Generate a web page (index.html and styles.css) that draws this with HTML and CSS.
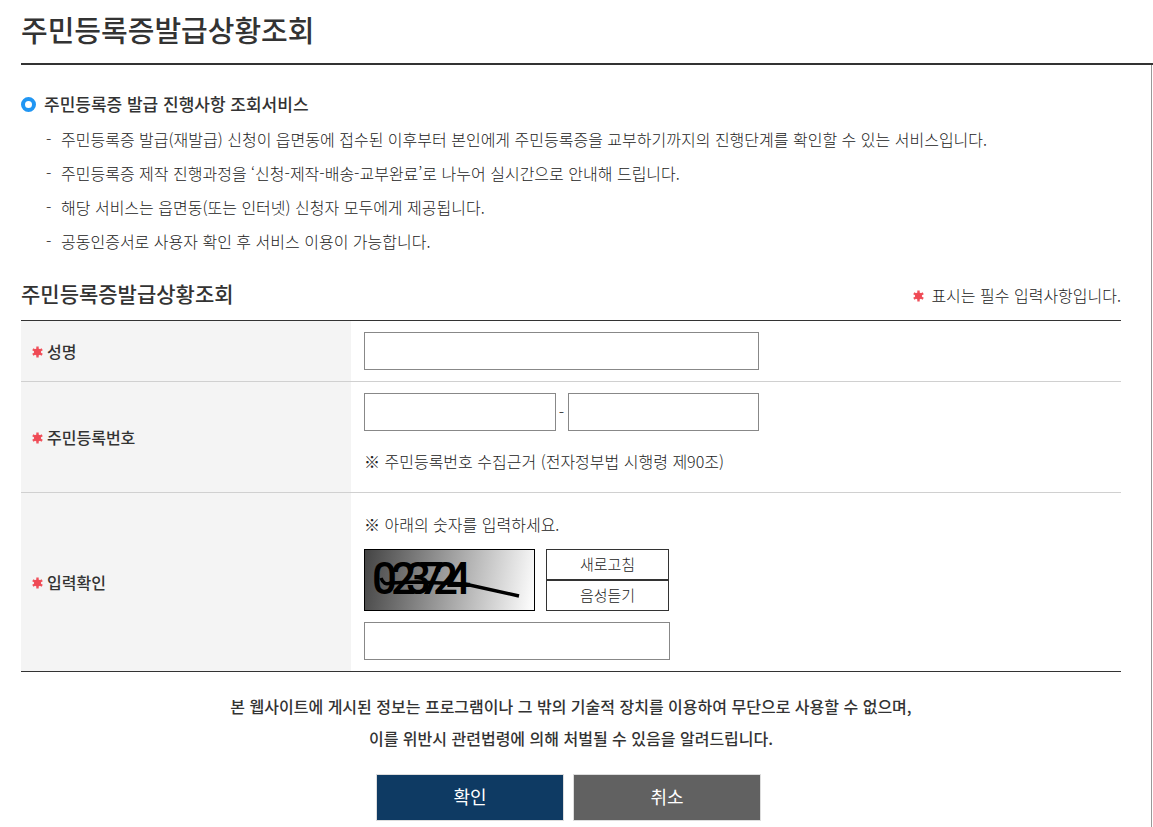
FILE: index.html
```html
<!DOCTYPE html>
<html lang="ko">
<head>
    <meta charset="UTF-8">
    <meta name="viewport" content="width=device-width, initial-scale=1.0">
    <title>주민등록증발급상황조회</title>
    <link rel="stylesheet" href="styles.css">
</head>
<body>
    <svg width="0" height="0" class="sprite" aria-hidden="true">
        <symbol id="star" viewBox="0 0 10 11">
            <path d="M5 0.5V10.5M0.7 3L9.3 8M9.3 3L0.7 8" stroke="#f0525c" stroke-width="2.2" fill="none"/>
            <circle cx="5" cy="5.5" r="3.2" fill="#ef4a55"/>
        </symbol>
    </svg>

    <header class="page-header">
        <h1>주민등록증발급상황조회</h1>
    </header>

    <main class="content">
        <section class="guide">
            <h2>주민등록증 발급 진행사항 조회서비스</h2>
            <ul>
                <li>주민등록증 발급(재발급) 신청이 읍면동에 접수된 이후부터 본인에게 주민등록증을 교부하기까지의 진행단계를 확인할 수 있는 서비스입니다.</li>
                <li>주민등록증 제작 진행과정을 ‘신청-제작-배송-교부완료’로 나누어 실시간으로 안내해 드립니다.</li>
                <li>해당 서비스는 읍면동(또는 인터넷) 신청자 모두에게 제공됩니다.</li>
                <li>공동인증서로 사용자 확인 후 서비스 이용이 가능합니다.</li>
            </ul>
        </section>

        <form onsubmit="return false;">
            <div class="form-head">
                <h3>주민등록증발급상황조회</h3>
                <p><svg class="star"><use href="#star"/></svg>표시는 필수 입력사항입니다.</p>
            </div>

            <table class="form-table">
                <tr>
                    <th scope="row"><svg class="star"><use href="#star"/></svg><label for="userName">성명</label></th>
                    <td><input type="text" id="userName" class="field"></td>
                </tr>
                <tr>
                    <th scope="row"><svg class="star"><use href="#star"/></svg><label for="rrn1">주민등록번호</label></th>
                    <td>
                        <div class="rrn">
                            <input type="text" id="rrn1" maxlength="6">
                            <span>-</span>
                            <input type="password" id="rrn2" maxlength="7" aria-label="주민등록번호 뒷자리">
                        </div>
                        <p class="note note-rrn">※ 주민등록번호 수집근거 (전자정부법 시행령 제90조)</p>
                    </td>
                </tr>
                <tr>
                    <th scope="row"><svg class="star"><use href="#star"/></svg><label for="captcha">입력확인</label></th>
                    <td>
                        <p class="note note-captcha">※ 아래의 숫자를 입력하세요.</p>
                        <div class="captcha">
                            <svg class="captcha-img" viewBox="0 0 169 60" role="img">
                                <text x="7 26 41 54 68 81" y="44">023724</text>
                                <path d="M16 28Q19 36 25 33L52 32L100 34L154 46" stroke="#000" stroke-width="3.5" fill="none"/>
                            </svg>
                            <div class="captcha-btns">
                                <button type="button">새로고침</button>
                                <button type="button">음성듣기</button>
                            </div>
                        </div>
                        <input type="text" id="captcha" class="field-captcha">
                    </td>
                </tr>
            </table>

            <p class="notice">본 웹사이트에 게시된 정보는 프로그램이나 그 밖의 기술적 장치를 이용하여 무단으로 사용할 수 없으며,<br>이를 위반시 관련법령에 의해 처벌될 수 있음을 알려드립니다.</p>

            <div class="actions">
                <button type="submit" class="btn-confirm">확인</button>
                <button type="button" class="btn-cancel">취소</button>
            </div>
        </form>
    </main>
</body>
</html>
```
FILE: styles.css
```css
* {
    margin: 0;
    padding: 0;
    box-sizing: border-box;
}

body {
    padding-left: 21px;
    background: #fff;
    color: #222;
    font-family: "Noto Sans CJK KR", sans-serif;
    font-size: 16px;
    font-weight: 300;
}

.sprite {
    position: absolute;
}

.page-header {
    padding: 7px 0 12px;
    border-bottom: 2px solid #333;
}

h1,
h2,
h3 {
    color: #333;
    font-weight: 500;
}

h1 {
    font-size: 29px;
    line-height: 44px;
}

.content {
    margin-right: 1px;
    padding: 25px 30px 6px 0;
    border-right: 1px solid #999;
}

/* Guide */
.guide h2 {
    display: flex;
    align-items: center;
    gap: 8px;
    margin-bottom: 4px;
    font-size: 17px;
    line-height: 28px;
}

.guide h2::before {
    content: "";
    box-sizing: border-box;
    width: 15px;
    height: 15px;
    border: 4px solid #2196f3;
    border-radius: 50%;
}

.guide ul {
    padding-left: 25px;
    list-style: none;
}

.guide li {
    display: flex;
    line-height: 34px;
}

.guide li::before {
    content: "-";
    width: 15px;
}

/* Form */
.form-head {
    display: flex;
    justify-content: space-between;
    align-items: flex-start;
    margin: 20px 0 8px;
    line-height: 34px;
}

.form-head h3 {
    font-size: 21px;
    line-height: 30px;
}

.star {
    width: 11px;
    height: 12px;
    margin-right: 4px;
}

.form-head .star {
    margin-right: 7px;
}

.form-table {
    width: 100%;
    border-collapse: separate;
    border-spacing: 0;
    border-top: 1px solid #333;
    border-bottom: 1px solid #333;
}

.form-table th {
    width: 30%;
    padding: 0 11px;
    background: #f4f4f4;
    color: #333;
    font-weight: 500;
    text-align: left;
}

.form-table td {
    padding: 11px 13px;
}

.form-table tr + tr th,
.form-table tr + tr td {
    border-top: 1px solid #d0d0d0;
}

input {
    display: block;
    height: 38px;
    padding: 0 8px;
    border: 1px solid #888;
    background: #fff;
    font: inherit;
}

.field,
.rrn {
    width: 100%;
    max-width: 395px;
}

.rrn {
    display: flex;
    align-items: center;
}

.rrn input {
    flex: 1;
    min-width: 0;
}

.rrn span {
    width: 12px;
    text-align: center;
}

.note {
    line-height: 30px;
}

.note-rrn {
    margin: 15px 0 5px;
}

.note-captcha {
    margin: 5px 0 10px;
}

.captcha {
    display: flex;
    gap: 11px;
    margin-bottom: 11px;
}

.captcha-img {
    width: 171px;
    height: 62px;
    border: 1px solid #000;
    background: linear-gradient(100deg, #444, #fff);
}

.captcha-img text {
    font-family: Roboto, "Liberation Sans", sans-serif;
    font-size: 44px;
    font-weight: 500;
}

.captcha-btns {
    display: flex;
    flex-direction: column;
    width: 123px;
}

.captcha-btns button {
    flex: 1;
    padding-bottom: 2px;
    border: 1px solid #333;
    background: #fff;
    color: #222;
    font: inherit;
    font-size: 15px;
    line-height: 20px;
    cursor: pointer;
}

.field-captcha {
    width: 306px;
}

.notice {
    margin: 18px 0 20px;
    color: #333;
    font-weight: 500;
    line-height: 32px;
    text-align: center;
}

.actions {
    display: flex;
    justify-content: center;
    gap: 9px;
    padding-right: 5px;
}

.actions button {
    width: 188px;
    height: 47px;
    padding-bottom: 3px;
    border: 1px solid #ddd;
    color: #fff;
    font: inherit;
    font-size: 18px;
    font-weight: 400;
    cursor: pointer;
}

.actions .btn-confirm {
    background: #0e3a63;
}

.actions .btn-cancel {
    background: #616161;
}
```
